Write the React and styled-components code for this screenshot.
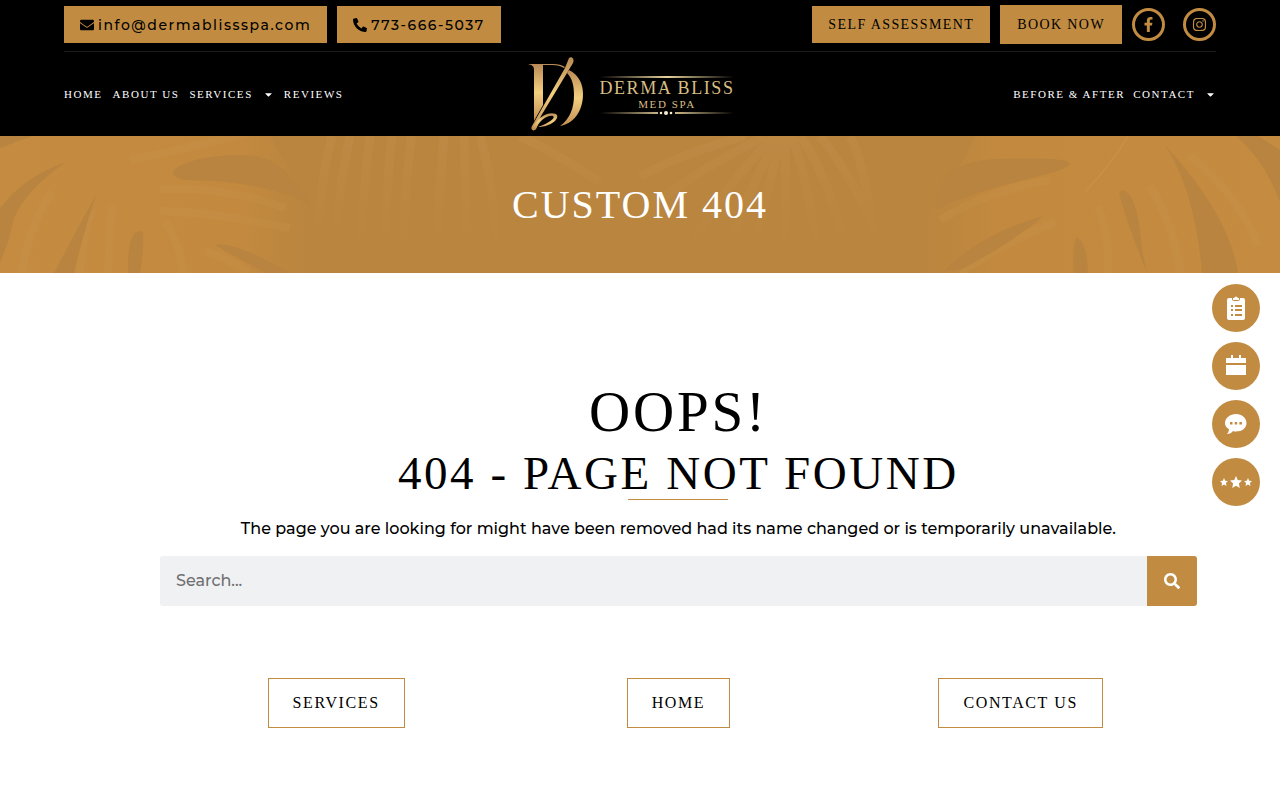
import React from "react";
import styled, { createGlobalStyle, css } from "styled-components";
import {
  FaCaretDown,
  FaEnvelope,
  FaFacebookF,
  FaInstagram,
  FaPhoneAlt,
  FaSearch,
} from "react-icons/fa";

const gold = "#c18c42";
const serif = '"Liberation Serif", "Times New Roman", serif';
const sans = 'Montserrat, Inter, "Open Sans", sans-serif';

const GlobalStyle = createGlobalStyle`
  *, *::before, *::after {
    box-sizing: border-box;
  }

  body {
    margin: 0;
    background: #fff;
    color: #000;
    font-family: ${sans};
    font-size: 16px;
  }

  a {
    color: inherit;
    text-decoration: none;
  }
`;

const Header = styled.header`
  padding: 0 5%;
  background: #000;
`;

const TopBar = styled.div`
  display: flex;
  align-items: center;
  justify-content: space-between;
  height: 52px;
  padding-bottom: 2px;
  border-bottom: 1px solid #1b1b1b;
`;

const BarGroup = styled.div`
  display: flex;
  align-items: center;
  gap: 10px;
`;

const TopButton = styled.a`
  display: flex;
  align-items: center;
  gap: 4px;
  height: 37px;
  padding: 0 16px;
  background: ${gold};
  color: #000;
  font-family: ${(props) => (props.$contact ? sans : serif)};
  font-size: 14px;
  font-weight: ${(props) => (props.$contact ? 500 : 400)};
  letter-spacing: ${(props) => (props.$contact ? "0.11em" : "0.1em")};
  white-space: nowrap;

  ${(props) => props.$bordered && css`
    height: 39px;
    border: 1px solid ${gold};
  `}
`;

const Socials = styled.div`
  display: flex;
  gap: 18px;
`;

const SocialLink = styled.a`
  display: flex;
  align-items: center;
  justify-content: center;
  width: 33px;
  height: 33px;
  border: 3px solid ${gold};
  border-radius: 50%;
  color: ${gold};
  font-size: 15px;
`;

const NavBar = styled.div`
  display: grid;
  grid-template-columns: 1fr auto 1fr;
  align-items: center;
  height: 84px;
`;

const Nav = styled.nav`
  display: flex;
  gap: ${(props) => (props.$end ? "8px" : "10px")};
  justify-content: ${(props) => (props.$end ? "flex-end" : "flex-start")};
`;

const NavLink = styled.a`
  display: flex;
  align-items: center;
  gap: 10px;
  color: #fff;
  font-family: ${serif};
  font-size: 11px;
  letter-spacing: 0.14em;
  line-height: 16px;
  white-space: nowrap;
`;

const Logo = styled.a`
  display: flex;
  align-items: center;
  gap: 14px;
  padding-right: 18px;
`;

const Wordmark = styled.span`
  display: flex;
  flex-direction: column;
  align-items: center;
  padding-top: 2px;
  color: #d8bd85;
  font-family: ${serif};
  letter-spacing: 0.1em;
`;

const WordmarkName = styled.span`
  font-size: 18px;
  line-height: 19px;
  white-space: nowrap;
`;

const WordmarkSub = styled.span`
  font-size: 11px;
  line-height: 13px;
`;

const Banner = styled.section`
  position: relative;
  display: flex;
  align-items: center;
  justify-content: center;
  height: 137px;
  overflow: hidden;
  background: #b9853f;
`;

const BannerArt = styled.svg`
  position: absolute;
  inset: 0;
  width: 100%;
  height: 100%;
`;

const BannerTitle = styled.h1`
  position: relative;
  margin: 0;
  color: #fff;
  font-family: ${serif};
  font-size: 40px;
  font-weight: 400;
  letter-spacing: 0.05em;
  line-height: 48px;
`;

const Main = styled.main`
  display: flex;
  flex-direction: column;
  padding: 104px 6.5% 72px 12.5%;
  text-align: center;
`;

const Oops = styled.h2`
  margin: 0;
  font-family: ${serif};
  font-size: 57px;
  font-weight: 400;
  letter-spacing: 0.05em;
  line-height: 70px;
`;

const NotFound = styled.h3`
  margin: 0;
  font-family: ${serif};
  font-size: 47px;
  font-weight: 400;
  letter-spacing: 0.055em;
  line-height: 52px;
`;

const Rule = styled.hr`
  width: 100px;
  margin: 0 auto;
  border: 0;
  border-top: 1px solid ${gold};
`;

const Message = styled.p`
  margin: 17px 0 15px;
  font-size: 16px;
  font-weight: 500;
  line-height: 24px;
`;

const SearchForm = styled.form`
  display: flex;
  height: 50px;
  overflow: hidden;
  border-radius: 3px;
  background: #f0f1f3;
`;

const SearchInput = styled.input`
  flex: 1;
  min-width: 0;
  padding: 0 16px 2px;
  border: 0;
  background: transparent;
  font-family: ${sans};
  font-size: 16px;
  font-weight: 500;

  &::placeholder {
    color: #6f7072;
    opacity: 1;
  }
`;

const SearchButton = styled.button`
  display: flex;
  align-items: center;
  justify-content: center;
  width: 50px;
  padding: 0;
  border: 0;
  background: ${gold};
  color: #fff;
  font-size: 16px;
`;

const LinkRow = styled.div`
  display: grid;
  grid-template-columns: repeat(3, 1fr);
  justify-items: center;
  margin-top: 72px;
  padding: 0 5px;
`;

const OutlineLink = styled.a`
  padding: 0 24px;
  border: 1px solid ${gold};
  font-family: ${serif};
  font-size: 16px;
  letter-spacing: 0.1em;
  line-height: 48px;
`;

const FloatingActions = styled.aside`
  position: fixed;
  top: 284px;
  right: 20px;
  display: flex;
  flex-direction: column;
  gap: 10px;
`;

const RoundButton = styled.button`
  display: flex;
  align-items: center;
  justify-content: center;
  gap: 2px;
  width: 48px;
  height: 48px;
  padding: 0;
  border: 0;
  border-radius: 50%;
  background: ${gold};
  color: #fff;
`;

function Monogram() {
  return (
    <svg width="58" height="76" viewBox="0 0 58 76" aria-hidden="true">
      <defs>
        <linearGradient id="monogram" x1="0" y1="0" x2="0" y2="1">
          <stop offset="0" stopColor="#b98a55" />
          <stop offset="0.5" stopColor="#f3cf7f" />
          <stop offset="1" stopColor="#c18d52" />
        </linearGradient>
      </defs>
      <g fill="url(#monogram)">
        <path d="M1 8H26C31 8 35 9 38 11L37 12C34 10 30 9 25 9H16V49L7 65V14C7 10 5 9 1 8Z" />
        <path d="M42 14C52 19 56 28 56 38C56 56 46 68 33 70C43 63 47 52 47 39C47 29 45 22 40 17Z" />
        <path d="M42 2C44 0 48 2 46 7L14 60L9 73C7 76 3 74 5 70L38 12Z" />
        <path d="M5 73C11 60 22 55 29 58C34 62 24 71 11 71C22 67 29 62 26 60C20 59 13 64 9 73Z" />
      </g>
    </svg>
  );
}

function WordmarkLine({ dots }) {
  return (
    <svg width="136" height="4" viewBox="0 0 136 4" aria-hidden="true">
      <path d="M1 2L68 1L135 2L68 3Z" fill="#e8d29c" />
      {dots && (
        <g fill="#f6ecd0">
          <rect x="59" y="0" width="17" height="4" fill="#000" />
          <circle cx="62" cy="2" r="1.3" />
          <circle cx="67" cy="2" r="2" />
          <circle cx="72" cy="2" r="1.3" />
        </g>
      )}
    </svg>
  );
}

function ClipboardIcon() {
  return (
    <svg width="18" height="24" viewBox="0 0 18 24" fill="currentColor" aria-hidden="true">
      <path d="M2 2H5C5 5 6 5 9 5S13 5 13 2H16Q18 2 18 4V22Q18 24 16 24H2Q0 24 0 22V4Q0 2 2 2Z" />
      <path d="M6 2H7Q9 -1 11 2H12V4H6Z" />
      <g fill={gold}>
        <path d="M4 9H6V11H4ZM4 13H6V15H4ZM4 18H6V20H4Z" />
        <path d="M8 9H15V11H8ZM8 13H15V15H8ZM8 18H15V20H8Z" />
      </g>
    </svg>
  );
}

function CalendarIcon() {
  return (
    <svg width="20" height="22" viewBox="0 0 20 22" fill="currentColor" aria-hidden="true">
      <path d="M0 3H5V0H7V3H13V0H15V3H20V8H0Z" />
      <path d="M0 10H20V20H0Z" />
    </svg>
  );
}

function ChatIcon() {
  return (
    <svg width="22" height="20" viewBox="0 0 22 20" fill="currentColor" aria-hidden="true">
      <path d="M11 0C17 0 21.500 4 21.500 9S17 17.500 11 17.500Q9 17.500 8 17Q6 20 2 20Q4 18 4 15Q0 13 0 9C0 4 5 0 11 0Z" />
      <path fill={gold} d="M5 8H7.500V10.500H5ZM9.700 8H12.200V10.500H9.700ZM14.400 8H16.900V10.500H14.400Z" />
    </svg>
  );
}

function Star({ size }) {
  return (
    <svg width={size} height={size} viewBox="0 0 24 24" fill="currentColor" aria-hidden="true">
      <path d="M12 0L15.500 8L24 9L17.800 15L19.500 24L12 19.500L4.500 24L6.200 15L0 9L8.500 8Z" />
    </svg>
  );
}

function PalmLeaves() {
  return (
    <BannerArt viewBox="0 0 1280 137" preserveAspectRatio="none" aria-hidden="true">
      <defs>
        <linearGradient id="leafLeft">
          <stop offset="0" stopColor="#c58c41" />
          <stop offset="0.75" stopColor="#c3893f" />
          <stop offset="1" stopColor="#b9853f" />
        </linearGradient>
        <linearGradient id="leafRight">
          <stop offset="0" stopColor="#b9853f" />
          <stop offset="0.25" stopColor="#c3893f" />
          <stop offset="1" stopColor="#c58c41" />
        </linearGradient>
        <linearGradient id="frond" x1="0" y1="0" x2="0" y2="137" gradientUnits="userSpaceOnUse">
          <stop offset="0" stopColor="#c28e49" />
          <stop offset="1" stopColor="#b9853f" />
        </linearGradient>
      </defs>
      <path d="M0 0H270C290 40 320 70 315 137H0Z" fill="url(#leafLeft)" />
      <path d="M975 0H1280V137H915C905 90 950 60 975 0Z" fill="url(#leafRight)" />
      <g fill="none" stroke="#c9964e" strokeWidth="8" opacity="0.25">
        <path d="M130 24Q190 12 250 -4" />
        <path d="M160 53Q230 51 285 72" />
        <path d="M160 75Q220 77 290 92" />
        <path d="M52 56Q28 90 22 137" />
        <path d="M92 74Q82 100 80 137" />
        <path d="M112 70Q110 100 108 137" />
        <path d="M165 85Q180 110 184 137" />
        <path d="M205 115Q230 124 250 137" />
        <path d="M940 84Q990 54 1050 44" />
        <path d="M960 137Q1010 104 1055 86" />
        <path d="M1098 70Q1110 100 1108 137" />
        <path d="M1150 50Q1175 90 1180 137" />
        <path d="M1190 20Q1240 60 1258 110" />
      </g>
      <path d="M1128 0Q1110 30 1085 56" fill="none" stroke="#c9964e" strokeWidth="2" opacity="0.5" />
      <g fill="#b8843f">
        <path d="M0 0H32L0 12Z" />
        <path d="M0 72Q25 40 66 26Q26 54 14 82Q8 110 0 126Z" />
        <path d="M97 57Q85 90 74 137H54Q76 95 97 57Z" />
        <path d="M143 96Q144 116 140 137H128Q127 90 143 96Z" />
        <path d="M173 37C174 26 220 16 255 20Q285 24 310 68Q260 44 184 44Q175 42 173 37Z" />
        <path d="M215 109Q230 104 292 137H266Q240 124 215 109Z" />
        <path d="M1070 28C1060 40 1000 44 935 74Q935 24 1000 23Q1070 21 1070 28Z" />
        <path d="M1043 80Q1015 105 960 134L944 135Q980 98 1043 80Z" />
        <path d="M1122 54C1142 60 1138 105 1147 137Q1128 90 1119 58Z" />
        <path d="M1165 9Q1195 55 1202 137H1238Q1230 80 1165 9Z" />
        <path d="M1076 101Q1087 105 1088 137H1074Q1072 115 1076 101Z" />
        <path d="M1236 0H1258L1280 14V66Q1265 25 1236 0Z" />
      </g>
      <g fill="none" stroke="url(#frond)" strokeWidth="9" opacity="0.45">
        <path d="M332 0Q322 40 318 90" />
        <path d="M350 0Q340 40 338 90" />
        <path d="M370 0Q362 60 360 137" />
        <path d="M392 0Q384 70 386 137" />
        <path d="M412 0Q402 60 404 137" />
        <path d="M444 0Q438 70 436 137" />
        <path d="M464 0Q466 70 468 137" />
        <path d="M480 0Q495 50 498 137" />
        <path d="M520 0Q560 20 600 46" />
        <path d="M745 0Q690 15 640 40" />
        <path d="M765 0Q715 25 665 60" />
        <path d="M774 0Q725 50 690 110" />
        <path d="M778 0Q745 60 720 137" />
        <path d="M782 0Q765 60 750 137" />
        <path d="M786 0Q785 60 785 137" />
        <path d="M792 0Q810 50 820 137" />
        <path d="M800 0Q835 50 850 137" />
        <path d="M820 0Q860 50 885 120" />
        <path d="M850 0Q865 30 870 80" />
      </g>
    </BannerArt>
  );
}

export default function App() {
  return (
    <>
      <GlobalStyle />
      <Header>
        <TopBar>
          <BarGroup>
            <TopButton $contact href="mailto:info@dermablissspa.com">
              <FaEnvelope />
              info@dermablissspa.com
            </TopButton>
            <TopButton $contact href="tel:773-666-5037">
              <FaPhoneAlt />
              773-666-5037
            </TopButton>
          </BarGroup>
          <BarGroup>
            <TopButton href="#assessment">SELF ASSESSMENT</TopButton>
            <TopButton $bordered href="#book">BOOK NOW</TopButton>
            <Socials>
              <SocialLink href="#facebook" aria-label="Facebook"><FaFacebookF /></SocialLink>
              <SocialLink href="#instagram" aria-label="Instagram"><FaInstagram /></SocialLink>
            </Socials>
          </BarGroup>
        </TopBar>
        <NavBar>
          <Nav aria-label="Main">
            <NavLink href="#home">HOME</NavLink>
            <NavLink href="#about">ABOUT US</NavLink>
            <NavLink href="#services">SERVICES <FaCaretDown /></NavLink>
            <NavLink href="#reviews">REVIEWS</NavLink>
          </Nav>
          <Logo href="#home" aria-label="Derma Bliss Med Spa">
            <Monogram />
            <Wordmark>
              <WordmarkLine />
              <WordmarkName>DERMA BLISS</WordmarkName>
              <WordmarkSub>MED SPA</WordmarkSub>
              <WordmarkLine dots />
            </Wordmark>
          </Logo>
          <Nav $end aria-label="More">
            <NavLink href="#before-after">BEFORE &amp; AFTER</NavLink>
            <NavLink href="#contact">CONTACT <FaCaretDown /></NavLink>
          </Nav>
        </NavBar>
      </Header>

      <Banner>
        <PalmLeaves />
        <BannerTitle>CUSTOM 404</BannerTitle>
      </Banner>

      <Main>
        <Oops>OOPS!</Oops>
        <NotFound>404 - PAGE NOT FOUND</NotFound>
        <Rule />
        <Message>
          The page you are looking for might have been removed had its name changed or is temporarily unavailable.
        </Message>
        <SearchForm role="search" onSubmit={(e) => e.preventDefault()}>
          <SearchInput type="search" placeholder="Search..." aria-label="Search" />
          <SearchButton type="submit" aria-label="Search"><FaSearch /></SearchButton>
        </SearchForm>
        <LinkRow>
          <OutlineLink href="#services">SERVICES</OutlineLink>
          <OutlineLink href="#home">HOME</OutlineLink>
          <OutlineLink href="#contact">CONTACT US</OutlineLink>
        </LinkRow>
      </Main>

      <FloatingActions aria-label="Quick actions">
        <RoundButton aria-label="Self assessment"><ClipboardIcon /></RoundButton>
        <RoundButton aria-label="Book an appointment"><CalendarIcon /></RoundButton>
        <RoundButton aria-label="Chat"><ChatIcon /></RoundButton>
        <RoundButton aria-label="Reviews">
          <Star size={8} />
          <Star size={12} />
          <Star size={8} />
        </RoundButton>
      </FloatingActions>
    </>
  );
}
